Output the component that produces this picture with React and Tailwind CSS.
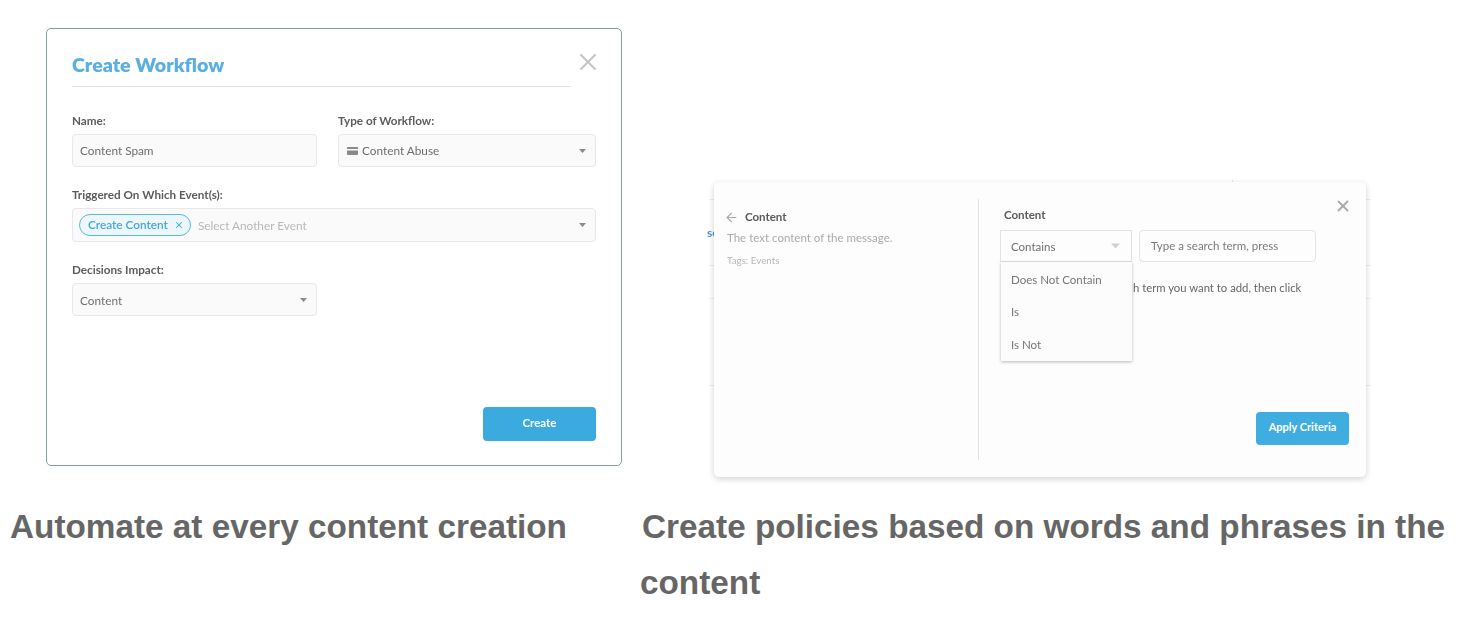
import { X, ArrowLeft } from 'lucide-react'

const ui = "font-['Lato','Open_Sans',sans-serif]"

const Caret = ({ className = '' }) => (
  <svg width="7" height="4" viewBox="0 0 7 4" className={className}>
    <path d="M0 0h7L3.5 4z" fill="currentColor" />
  </svg>
)

const Field = ({ label, className = '', children }) => (
  <div className={className}>
    <div className="mb-[7px] text-[11.7px] leading-[13px] font-bold text-[#5c5c5c]">{label}</div>
    <div className="flex h-[33px] items-center rounded-[4px] border border-[#e8e8e8] bg-[#fafafa] px-[7px] text-[11.8px] text-[#6e6e6e]">
      {children}
    </div>
  </div>
)

const WorkflowCard = () => (
  <div className="relative flex h-[438px] w-[576px] flex-col rounded-[5px] border border-[#8b9ca1] bg-white pr-[25px] pb-[24px] pl-[25px] blur-[0.35px]">
    <X className="absolute top-[19px] right-[19px] h-[28px] w-[28px] text-[#c6c6c6]" strokeWidth={1.8} />
    <div className="mr-[25px] border-b border-[#e3e3e3] pt-[22px] pb-[8px] text-[19.6px] leading-[27px] font-extrabold text-[#5aaee0]">
      Create Workflow
    </div>

    <div className="mt-[27px] grid grid-cols-[245px_258px] gap-x-[21px]">
      <Field label="Name:">Content Spam</Field>
      <Field label="Type of Workflow:">
        <svg width="11" height="8" viewBox="0 0 11 8" className="mr-[4px] ml-px">
          <path d="M0 1a1 1 0 0 1 1-1h9a1 1 0 0 1 1 1v1H0zM0 3.4h11V7a1 1 0 0 1-1 1H1a1 1 0 0 1-1-1z" fill="#8a8a8a" />
        </svg>
        Content Abuse
        <Caret className="ml-auto mr-[2px] text-[#8a8a8a]" />
      </Field>
    </div>

    <div className="mt-[21px]">
      <div className="mb-[7px] text-[11.7px] leading-[13px] font-bold text-[#5c5c5c]">Triggered On Which Event(s):</div>
      <div className="flex h-[34px] items-center rounded-[4px] border border-[#e8e8e8] bg-[#fafafa] pr-[7px] pl-[6px] text-[11.8px]">
        <span className="flex h-[22px] items-center rounded-[11px] border border-[#5cb6e4] bg-[#ecf7fc] pr-[6px] pl-[8px] font-semibold text-[#48a6da]">
          Create Content
          <X className="ml-[6px] h-[10px] w-[10px]" strokeWidth={2.5} />
        </span>
        <span className="mt-px ml-[7px] text-[#b8b8b8]">Select Another Event</span>
        <Caret className="ml-auto mr-[2px] text-[#8a8a8a]" />
      </div>
    </div>

    <Field label="Decisions Impact:" className="mt-[21px] w-[245px]">
      <span className="mt-[2px]">Content</span>
      <Caret className="ml-auto mr-[2px] text-[#8a8a8a]" />
    </Field>

    <button className="mt-auto ml-auto h-[34px] w-[113px] rounded-[4px] bg-[#3babdf] pb-[2px] text-[11.5px] font-bold text-white">
      Create
    </button>
  </div>
)

const CriteriaModal = () => (
  <div className="relative h-[295px] w-[652px] blur-[0.35px]">
    {/* page behind the modal */}
    <div className="absolute top-[17px] -left-[5px] h-px w-[662px] bg-[#eeeeee]" />
    <div className="absolute top-[83px] -left-[5px] h-px w-[662px] bg-[#eeeeee]" />
    <div className="absolute top-[116px] -left-[5px] h-px w-[662px] bg-[#eeeeee]" />
    <div className="absolute top-[203px] -left-[5px] h-px w-[662px] bg-[#eeeeee]" />
    <div className="absolute -top-[2px] left-[518px] h-[4px] w-px bg-[#e6e6e6]" />
    <span className="absolute top-[44px] -left-[7px] text-[12px] leading-[14px] font-bold text-[#4f94c9]">sc</span>

    <div className="relative flex h-full rounded-[5px] bg-[#fdfdfd] shadow-[0_2px_6px_rgba(0,0,0,0.18)]">
      <div className="w-[264px] pt-[17px] pl-[13px]">
        <div className="mt-[11px] flex h-[14px] items-center text-[11.5px] leading-[14px] font-bold text-[#5a5a5a]">
          <ArrowLeft className="mr-[6px] -ml-[3px] h-[15px] w-[15px] text-[#a8a8a8]" strokeWidth={1.8} />
          Content
        </div>
        <div className="mt-[7px] text-[11.5px] leading-[14px] text-[#ababab]">The text content of the message.</div>
        <div className="mt-[9px] text-[9.8px] leading-[12px] text-[#b8b8b8]">Tags: Events</div>
      </div>

      <div className="my-[17px] w-px bg-[#e2e2e2]" />

      <div className="relative flex-1 pt-[26px] pr-[17px] pl-[25px]">
        <X className="absolute top-[15px] right-[14px] h-[18px] w-[18px] text-[#ababab]" strokeWidth={2.5} />
        <div className="text-[11.5px] leading-[14px] font-bold text-[#5a5a5a]">Content</div>

        <div className="mt-[8px] -ml-[4px] flex gap-[7px]">
          <div className="flex h-[32px] w-[132px] items-center border border-[#e2e2e2] px-[10px] pt-[2px] text-[11.5px] text-[#6e6e6e]">
            Contains
            <Caret className="ml-auto mr-[1px] mb-[2px] h-[6px] w-[9px] text-[#d0d0d0]" />
          </div>
          <div className="flex h-[32px] w-[177px] items-center rounded-[4px] border border-[#e4e4e4] px-[11px] text-[11.5px] text-[#7a7a7a]">
            Type a search term, press
          </div>
        </div>

        <p className="mt-[19px] ml-[129px] whitespace-nowrap text-[11.3px] leading-[14px] text-[#666666]">
          h term you want to add, then click
        </p>

        <div className="absolute top-[80px] left-[22px] w-[131px] bg-[#fcfcfc] text-[11.5px] text-[#777777] shadow-[0_1px_3px_rgba(0,0,0,0.28)]">
          <div className="flex h-[33px] items-center px-[10px] pt-[2px]">Does Not Contain</div>
          <div className="flex h-[33px] items-center px-[10px]">Is</div>
          <div className="flex h-[33px] items-center px-[10px]">Is Not</div>
        </div>

        <button className="absolute right-[17px] bottom-[32px] h-[33px] w-[93px] rounded-[4px] bg-[#3fade0] pb-[3px] text-[11px] font-bold text-white">
          Apply Criteria
        </button>
      </div>
    </div>
  </div>
)

const Caption = ({ className = '', children }) => (
  <h3 className={`font-['Liberation_Sans',Arial,sans-serif] text-[33.3px] leading-[56px] font-bold text-[#666666] ${className}`}>
    {children}
  </h3>
)

export default function App() {
  return (
    <div className={`grid h-[628px] w-[1472px] grid-cols-[640px_832px] grid-rows-[499px_129px] overflow-hidden bg-white ${ui}`}>
      <div className="pt-[28px] pl-[46px]">
        <WorkflowCard />
      </div>
      <div className="pt-[182px] pl-[74px]">
        <CriteriaModal />
      </div>
      <Caption className="pl-[10px]">Automate at every content creation</Caption>
      <Caption className="indent-[2px]">Create policies based on words and phrases in the content</Caption>
    </div>
  )
}
